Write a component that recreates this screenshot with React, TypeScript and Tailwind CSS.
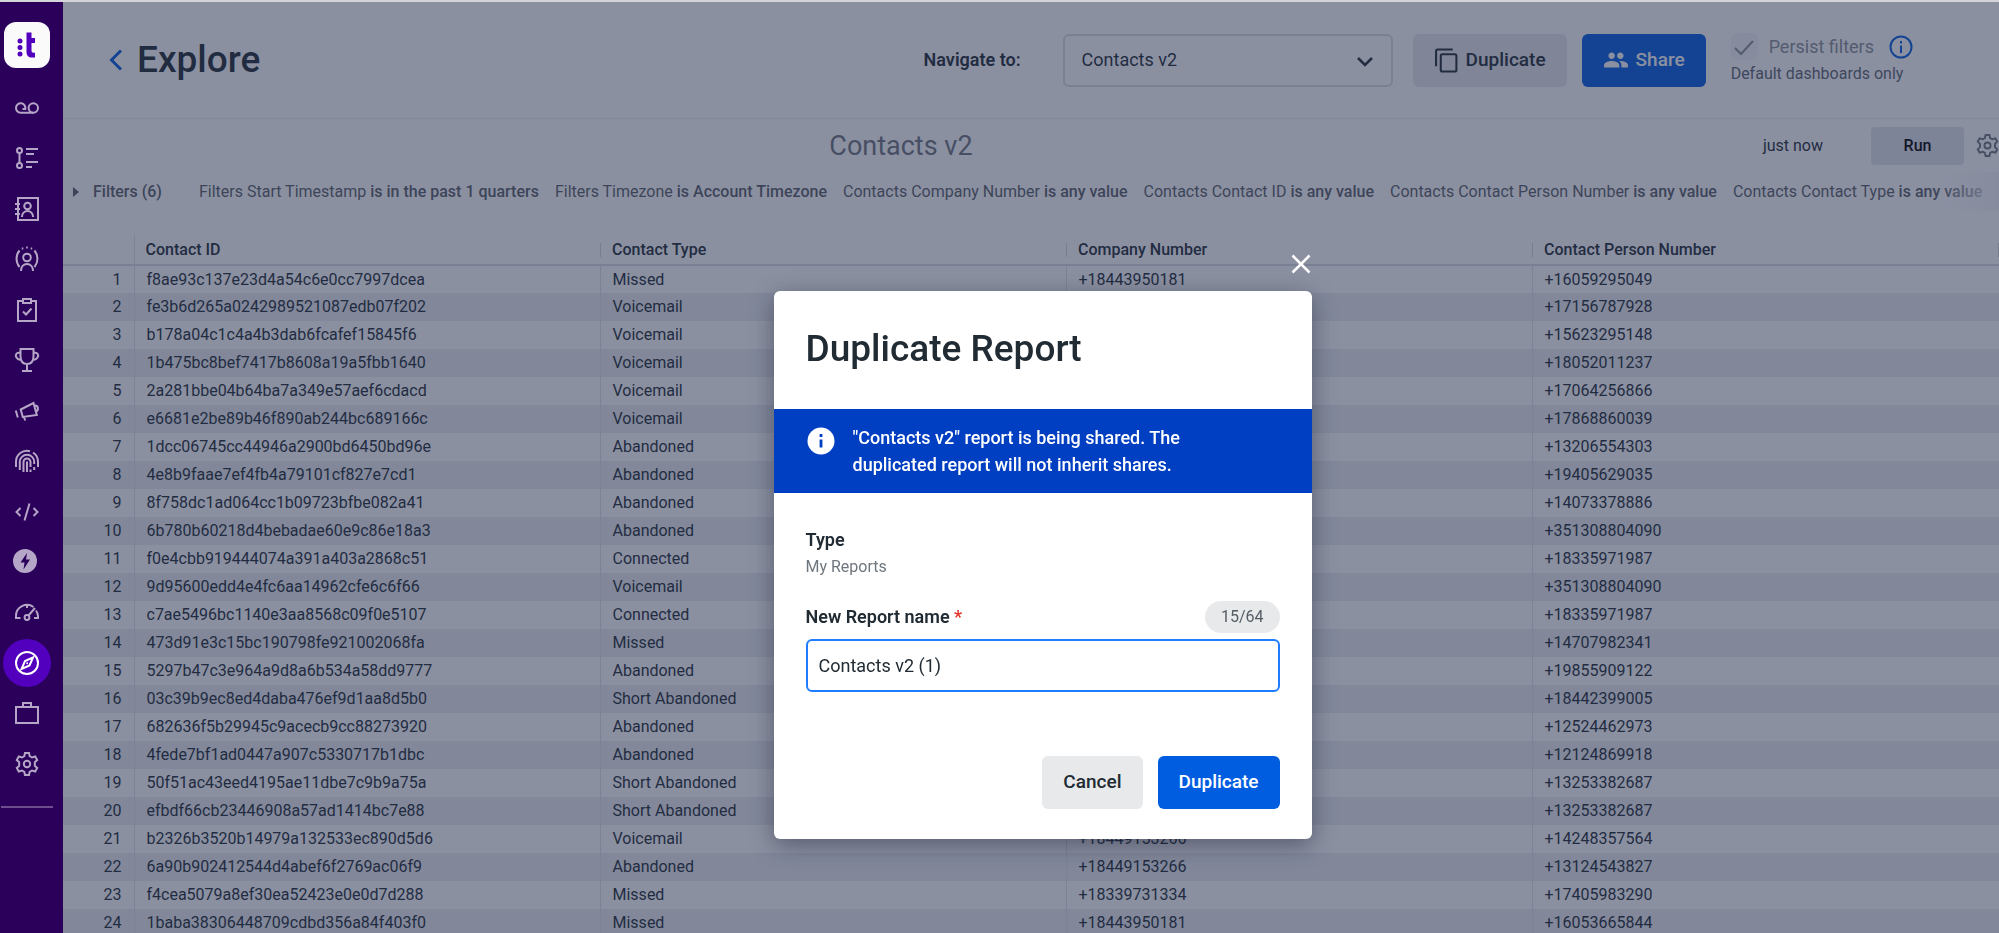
import React, { useState } from 'react';
import { MdPeople } from 'react-icons/md';

interface Contact {
  id: string;
  type: string;
  company: string;
  person: string;
}

interface Filter {
  field: string;
  condition: string;
}

const contacts: Contact[] = [
  { id: 'f8ae93c137e23d4a54c6e0cc7997dcea', type: 'Missed', company: '+18443950181', person: '+16059295049' },
  { id: 'fe3b6d265a0242989521087edb07f202', type: 'Voicemail', company: '+18443950181', person: '+17156787928' },
  { id: 'b178a04c1c4a4b3dab6fcafef15845f6', type: 'Voicemail', company: '+18443950181', person: '+15623295148' },
  { id: '1b475bc8bef7417b8608a19a5fbb1640', type: 'Voicemail', company: '+18443950181', person: '+18052011237' },
  { id: '2a281bbe04b64ba7a349e57aef6cdacd', type: 'Voicemail', company: '+18443950181', person: '+17064256866' },
  { id: 'e6681e2be89b46f890ab244bc689166c', type: 'Voicemail', company: '+18443950181', person: '+17868860039' },
  { id: '1dcc06745cc44946a2900bd6450bd96e', type: 'Abandoned', company: '+18443950181', person: '+13206554303' },
  { id: '4e8b9faae7ef4fb4a79101cf827e7cd1', type: 'Abandoned', company: '+18443950181', person: '+19405629035' },
  { id: '8f758dc1ad064cc1b09723bfbe082a41', type: 'Abandoned', company: '+18443950181', person: '+14073378886' },
  { id: '6b780b60218d4bebadae60e9c86e18a3', type: 'Abandoned', company: '+18449153266', person: '+351308804090' },
  { id: 'f0e4cbb919444074a391a403a2868c51', type: 'Connected', company: '+18449153266', person: '+18335971987' },
  { id: '9d95600edd4e4fc6aa14962cfe6c6f66', type: 'Voicemail', company: '+18449153266', person: '+351308804090' },
  { id: 'c7ae5496bc1140e3aa8568c09f0e5107', type: 'Connected', company: '+18449153266', person: '+18335971987' },
  { id: '473d91e3c15bc190798fe921002068fa', type: 'Missed', company: '+18443950181', person: '+14707982341' },
  { id: '5297b47c3e964a9d8a6b534a58dd9777', type: 'Abandoned', company: '+18443950181', person: '+19855909122' },
  { id: '03c39b9ec8ed4daba476ef9d1aa8d5b0', type: 'Short Abandoned', company: '+18443950181', person: '+18442399005' },
  { id: '682636f5b29945c9acecb9cc88273920', type: 'Abandoned', company: '+18443950181', person: '+12524462973' },
  { id: '4fede7bf1ad0447a907c5330717b1dbc', type: 'Abandoned', company: '+18443950181', person: '+12124869918' },
  { id: '50f51ac43eed4195ae11dbe7c9b9a75a', type: 'Short Abandoned', company: '+18443950181', person: '+13253382687' },
  { id: 'efbdf66cb23446908a57ad1414bc7e88', type: 'Short Abandoned', company: '+18443950181', person: '+13253382687' },
  { id: 'b2326b3520b14979a132533ec890d5d6', type: 'Voicemail', company: '+18449153266', person: '+14248357564' },
  { id: '6a90b902412544d4abef6f2769ac06f9', type: 'Abandoned', company: '+18449153266', person: '+13124543827' },
  { id: 'f4cea5079a8ef30ea52423e0e0d7d288', type: 'Missed', company: '+18339731334', person: '+17405983290' },
  { id: '1baba38306448709cdbd356a84f403f0', type: 'Missed', company: '+18443950181', person: '+16053665844' },
];

const filters: Filter[] = [
  { field: 'Filters Start Timestamp', condition: 'is in the past 1 quarters' },
  { field: 'Filters Timezone', condition: 'is Account Timezone' },
  { field: 'Contacts Company Number', condition: 'is any value' },
  { field: 'Contacts Contact ID', condition: 'is any value' },
  { field: 'Contacts Contact Person Number', condition: 'is any value' },
  { field: 'Contacts Contact Type', condition: 'is any value' },
];

const columns = ['Contact Type', 'Company Number', 'Contact Person Number', ''];

const gear = (
  <>
    <path d="M10 1h4l.7 3.2 2.3 1.3 3.2-1 2 3.5-2.4 2.3v3.4l2.4 2.3-2 3.5-3.2-1-2.3 1.3L14 23h-4l-.7-3.2L7 18.5l-3.2 1-2-3.5 2.4-2.3v-3.4L1.8 8l2-3.5 3.2 1 2.3-1.3z" />
    <circle cx="12" cy="12" r="3.2" />
  </>
);

// 24x24 line drawings for the side navigation
const navIcons: { name: string; icon: React.ReactNode }[] = [
  {
    name: 'Conversations',
    icon: (
      <>
        <path d="M7.5 13h2.8A4.7 4.7 0 1 0 5.7 16.7H18.3" />
        <circle cx="18.3" cy="12" r="4.7" />
      </>
    ),
  },
  {
    name: 'Flows',
    icon: (
      <>
        <circle cx="4.5" cy="4.5" r="2.5" />
        <circle cx="4.5" cy="19.5" r="2.5" />
        <path d="M4.5 7v10M11 3h12M11 8h8M11 16h12M11 21h6" />
      </>
    ),
  },
  {
    name: 'Contacts',
    icon: (
      <>
        <path d="M3 1h20v22H3zM0 7h5M0 12h5M0 17h5" />
        <circle cx="12.5" cy="9" r="3.3" />
        <path d="M7 20v-.5a5.5 5.5 0 0 1 11 0v.5" />
      </>
    ),
  },
  {
    name: 'Agents',
    icon: (
      <>
        <circle cx="12" cy="10.5" r="3.8" />
        <path d="M6 24c0-4 2.5-7 6-7s6 3 6 7M4.5 3.5a13 13 0 0 0 0 16.5M19.5 3.5a13 13 0 0 1 0 16.5" />
        <path d="M6.8 1.5h1.5M11.2.5h1.6M15.7 1.5h1.5" />
      </>
    ),
  },
  { name: 'Tasks', icon: <path d="M8 3H3v20h18V3h-5M8 1h8v4H8zM8 13.5l3 3 5.5-6" /> },
  {
    name: 'Performance',
    icon: (
      <path d="M5.5 1h13v7c0 5-2.5 8-6.5 8S5.5 13 5.5 8zM5.5 5C1 4 0 7 1.5 9.5S5 12 6.5 11.5M18.5 5c4.5-1 5.5 2 4 4.5s-3.5 2.5-5 2M12 16v7M7 23h10" />
    ),
  },
  {
    name: 'Campaigns',
    icon: <path d="M5.7 10.5 18.5 4l3.3 12-14 2zM.8 11.5l2 7M9 18l1.2 3.5M19.5 6.5c4-.5 4.5 5 1.5 6" />,
  },
  {
    name: 'Identity',
    icon: (
      <>
        <path d="M1 18v-5A11 11 0 0 1 15 2.2M18 3.5a11 11 0 0 1 5 9.5v5" />
        <path d="M4.8 21v-8a7.2 7.2 0 0 1 14.4 0v2M19.2 18v3" />
        <path d="M8.5 23v-10a3.5 3.5 0 0 1 7 0v5M15.5 20.5V23M12 12.5V23" />
      </>
    ),
  },
  { name: 'Developer', icon: <path d="M5.5 8 1.5 12l4 4M18.5 8l4 4-4 4M14.5 3.5l-5 17" /> },
  {
    name: 'Automations',
    icon: (
      <>
        <circle cx="10" cy="11" r="12" fill="currentColor" stroke="none" />
        <path d="M12 3 5.5 12.5H9.5L8.5 19.5 15 9.5H11z" fill="#2a005a" stroke="none" />
      </>
    ),
  },
  {
    name: 'Live',
    icon: (
      <>
        <path d="M5.5 17H1v-2a11 11 0 0 1 17.5-9M21 9.5A11 11 0 0 1 23 15v2h-4M12 4v3M13.5 14.5 20 7" />
        <circle cx="12" cy="16.5" r="2.4" />
      </>
    ),
  },
  {
    name: 'Explore',
    icon: (
      <>
        <circle cx="12" cy="12" r="11" />
        <path d="m18 6.5-3.5 8L6.5 18l3.5-8z" />
        <circle cx="12.2" cy="12.2" r="1" fill="currentColor" stroke="none" />
      </>
    ),
  },
  { name: 'Workspace', icon: <path d="M1 6h22v16H1zM8 6V2h8v4" /> },
  { name: 'Settings', icon: gear },
];

const Sidebar = () => (
  <nav aria-label="Main" className="relative z-20 flex w-[63px] shrink-0 flex-col bg-[#2a005a] text-[#b5a5c6]">
    <a href="#home" aria-label="Home" className="mt-5 ml-1 flex size-[46px] items-center justify-center rounded-xl bg-[#fafafa]">
      <svg viewBox="0 0 20 26" className="h-[26px] w-5 text-[#5200bd]" fill="currentColor">
        <circle cx="3" cy="9" r="2.5" />
        <circle cx="3" cy="15.5" r="2.5" />
        <circle cx="3" cy="22" r="2.5" />
        <path d="M9.5.5h5V6H18v5h-3.5v7.5c0 1.5.8 2.2 2 2.2H18v4.8h-3c-3.5 0-5.5-2-5.5-6z" />
      </svg>
    </a>
    <ul className="mt-4 ml-[3px] flex h-[704px] w-12 flex-col justify-between">
      {navIcons.map((item) => (
        <li key={item.name}>
          <a
            href={`#${item.name.toLowerCase()}`}
            aria-label={item.name}
            className={`flex size-12 items-center justify-center rounded-full ${
              item.name === 'Explore' ? 'bg-[#5200bd] text-white' : ''
            }`}
          >
            <svg viewBox="0 0 24 24" className="size-6 overflow-visible" fill="none" stroke="currentColor" strokeWidth="2">
              {item.icon}
            </svg>
          </a>
        </li>
      ))}
    </ul>
    <div className="mt-[18px] ml-px h-0.5 w-[52px] bg-[#6d4d8e]" />
  </nav>
);

const Header = () => (
  <header className="flex h-[117px] items-center border-b border-[#eceef0] pr-[86px] pl-[46px]">
    <a href="#back" aria-label="Back" className="text-[#005de0]">
      <svg viewBox="0 0 14 22" className="h-[22px] w-3.5" fill="none" stroke="currentColor" strokeWidth="3">
        <path d="M12 1.5 2.5 11l9.5 9.5" />
      </svg>
    </a>
    <h1 className="ml-[14px] text-[37px] leading-10 font-medium">Explore</h1>
    <label htmlFor="navigate" className="ml-auto text-lg font-semibold">
      Navigate to:
    </label>
    <div className="relative ml-[42px]">
      <select
        id="navigate"
        className="h-[53px] w-[330px] appearance-none rounded-md border-2 border-[#dcdee0] bg-white px-[17px] text-lg"
      >
        <option>Contacts v2</option>
      </select>
      <svg viewBox="0 0 16 10" className="pointer-events-none absolute top-[23px] right-5 h-2.5 w-4" fill="none" stroke="currentColor" strokeWidth="2.5">
        <path d="m1 1 7 7 7-7" />
      </svg>
    </div>
    <button className="ml-5 flex h-[53px] items-center gap-[7px] rounded-md bg-[#e8e9eb] px-[21px] text-[19px] font-medium">
      <svg viewBox="0 0 24 24" className="size-[25px]" fill="none" stroke="currentColor" strokeWidth="2">
        <path d="M2 17.5V3a1.5 1.5 0 0 1 1.5-1.5H18" />
        <rect x="6.5" y="6" width="15" height="16.5" rx="1.5" />
      </svg>
      Duplicate
    </button>
    <button className="ml-[15px] flex h-[53px] items-center gap-[7px] rounded-md bg-[#005de0] px-[21px] text-[19px] font-medium text-white">
      <MdPeople className="size-[26px]" />
      Share
    </button>
    <div className="ml-[25px]">
      <div className="flex items-center text-[#8a8f96]">
        <label className="flex items-center gap-[11px] text-lg leading-[27px]">
          <span className="relative flex">
            <input type="checkbox" defaultChecked disabled className="size-[27px] appearance-none rounded-md bg-[#f5f6f8]" />
            <svg viewBox="0 0 27 27" className="pointer-events-none absolute inset-0" fill="none" stroke="currentColor" strokeWidth="2">
              <path d="m4 15 6 6L22 8" />
            </svg>
          </span>
          Persist filters
        </label>
        <svg viewBox="0 0 24 24" className="ml-[15px] size-6 text-[#005de0]" fill="none" stroke="currentColor" strokeWidth="2">
          <circle cx="12" cy="12" r="10.5" />
          <path d="M12 10.5V18M12 6v2.5" />
        </svg>
      </div>
      <p className="text-base leading-[27px] text-[#5d6570]">Default dashboards only</p>
    </div>
  </header>
);

const ReportBar = () => (
  <div className="flex h-[53px] items-center">
    <h2 className="flex-1 text-center text-[27px] leading-8 text-[#6f757e]">Contacts v2</h2>
    <span className="ml-6 text-base">just now</span>
    <button className="mr-3 ml-12 h-[38px] w-[93px] rounded-sm bg-[#e4e6ea] text-base font-medium text-black">Run</button>
    <button aria-label="Report settings" className="text-[#6f757e]">
      <svg viewBox="0 0 24 24" className="size-[23px]" fill="none" stroke="currentColor" strokeWidth="2">
        {gear}
      </svg>
    </button>
  </div>
);

const Filters = () => (
  <div className="relative flex h-[39px] items-center overflow-hidden pl-2.5 text-[#5a5f66]">
    <button className="flex shrink-0 items-center gap-[14px] text-base font-medium">
      <svg viewBox="0 0 6 10" className="h-2.5 w-1.5" fill="currentColor">
        <path d="M0 0l6 5-6 5z" />
      </svg>
      Filters (6)
    </button>
    <ul className="ml-[37px] flex gap-4 whitespace-nowrap">
      {filters.map((filter) => (
        <li key={filter.field}>
          {filter.field} <span className="font-medium">{filter.condition}</span>
        </li>
      ))}
    </ul>
    <div className="absolute inset-y-0 right-0 w-16 bg-linear-to-r from-white/0 to-[#f4f4f8]/90" />
  </div>
);

const ContactsTable = () => (
  <table className="mt-6 w-full table-fixed border-collapse text-left">
    <colgroup>
      <col className="w-[71px]" />
      <col className="w-[466px]" />
      <col className="w-[466px]" />
      <col className="w-[466px]" />
      <col />
      <col className="w-px" />
    </colgroup>
    <thead>
      <tr className="h-[30px] border-b-2 border-[#dcdee2]">
        <th className="border-r border-[#e2e4e8]" aria-label="Row" />
        <th className="pl-[11px] font-medium">Contact ID</th>
        {columns.map((column) => (
          <th key={column} className="font-medium">
            <div className="h-3.5 border-l border-[#d5d8dc] pl-[11px] leading-3.5 whitespace-nowrap">{column}</div>
          </th>
        ))}
      </tr>
    </thead>
    <tbody>
      {contacts.map((contact, index) => (
        <tr key={contact.id} className="h-7 even:bg-[#eceef1]">
          <td className="border-r border-[#e2e4e8] pr-3 text-right">{index + 1}</td>
          <td className="pl-3">{contact.id}</td>
          <td className="border-l border-[#e2e4e8] pl-3">{contact.type}</td>
          <td className="border-l border-[#e2e4e8] pl-3">{contact.company}</td>
          <td className="border-l border-[#e2e4e8] pl-3">{contact.person}</td>
          <td />
        </tr>
      ))}
    </tbody>
  </table>
);

const DuplicateModal = () => {
  const [name, setName] = useState('Contacts v2 (1)');

  return (
    <div className="fixed inset-x-0 top-0.5 bottom-0 z-10 flex items-start justify-center bg-[#242e4d]/53 pt-[249px] pl-[86px]">
      <div className="flex w-[538px] flex-col">
        <button aria-label="Close" className="mb-[15px] flex h-[25px] w-[22px] items-center justify-center self-end text-white">
          <svg viewBox="0 0 20 20" className="size-5" fill="none" stroke="currentColor" strokeWidth="2.5">
            <path d="m1.5 1.5 17 17M18.5 1.5l-17 17" />
          </svg>
        </button>
        <form
          role="dialog"
          aria-labelledby="modal-title"
          onSubmit={(e) => e.preventDefault()}
          className="rounded-md bg-white pb-[30px] text-[#212b33] shadow-[0_6px_24px_rgba(20,25,45,0.45)]"
        >
          <h2 id="modal-title" className="px-8 pt-9 pb-[38px] text-[37px] leading-[44px] font-medium">
            Duplicate Report
          </h2>
          <div className="flex gap-[18px] bg-[#003fc1] px-8 py-[15px] text-lg leading-[27px] font-medium text-white">
            <svg viewBox="0 0 28 30" className="ml-px h-[32px] w-[28px] shrink-0">
              <circle cx="14" cy="16" r="13.5" fill="#fff" />
              <path d="M14 14.5v8M14 9v3" stroke="#003fc1" strokeWidth="2.8" />
            </svg>
            <p className="max-w-[360px]">
              "Contacts v2" report is being shared. The duplicated report will not inherit shares.
            </p>
          </div>
          <div className="px-8 pt-[33px]">
            <h3 className="text-lg leading-[27px] font-semibold">Type</h3>
            <p className="text-base leading-[27px] text-[#6f777e]">My Reports</p>
            <div className="mt-5 flex items-center justify-between">
              <label htmlFor="report-name" className="text-lg leading-[34px] font-semibold">
                New Report name <span className="text-[#e0342b]">*</span>
              </label>
              <span className="rounded-full bg-[#e8e9eb] px-4 text-base leading-8 text-[#555d64]">15/64</span>
            </div>
            <input
              id="report-name"
              value={name}
              onChange={(e) => setName(e.target.value)}
              className="mt-[5px] block h-[53px] w-full rounded-md border-2 border-[#1f7cff] px-[11px] text-lg outline-none"
            />
            <div className="mt-16 flex justify-end gap-[15px]">
              <button type="button" className="h-[53px] rounded-md bg-[#e8e9eb] px-[21px] text-[19px] font-medium">
                Cancel
              </button>
              <button type="submit" className="h-[53px] rounded-md bg-[#005de0] px-[21px] text-[19px] font-medium text-white">
                Duplicate
              </button>
            </div>
          </div>
        </form>
      </div>
    </div>
  );
};

const App = () => {
  return (
    <div className="flex h-screen overflow-hidden border-t-2 border-[#d3d5d9] bg-white font-[Roboto,sans-serif] text-base text-[#212b33]">
      <Sidebar />
      <main className="min-w-0 flex-1">
        <Header />
        <ReportBar />
        <Filters />
        <ContactsTable />
      </main>
      <DuplicateModal />
    </div>
  );
};

export default App;
